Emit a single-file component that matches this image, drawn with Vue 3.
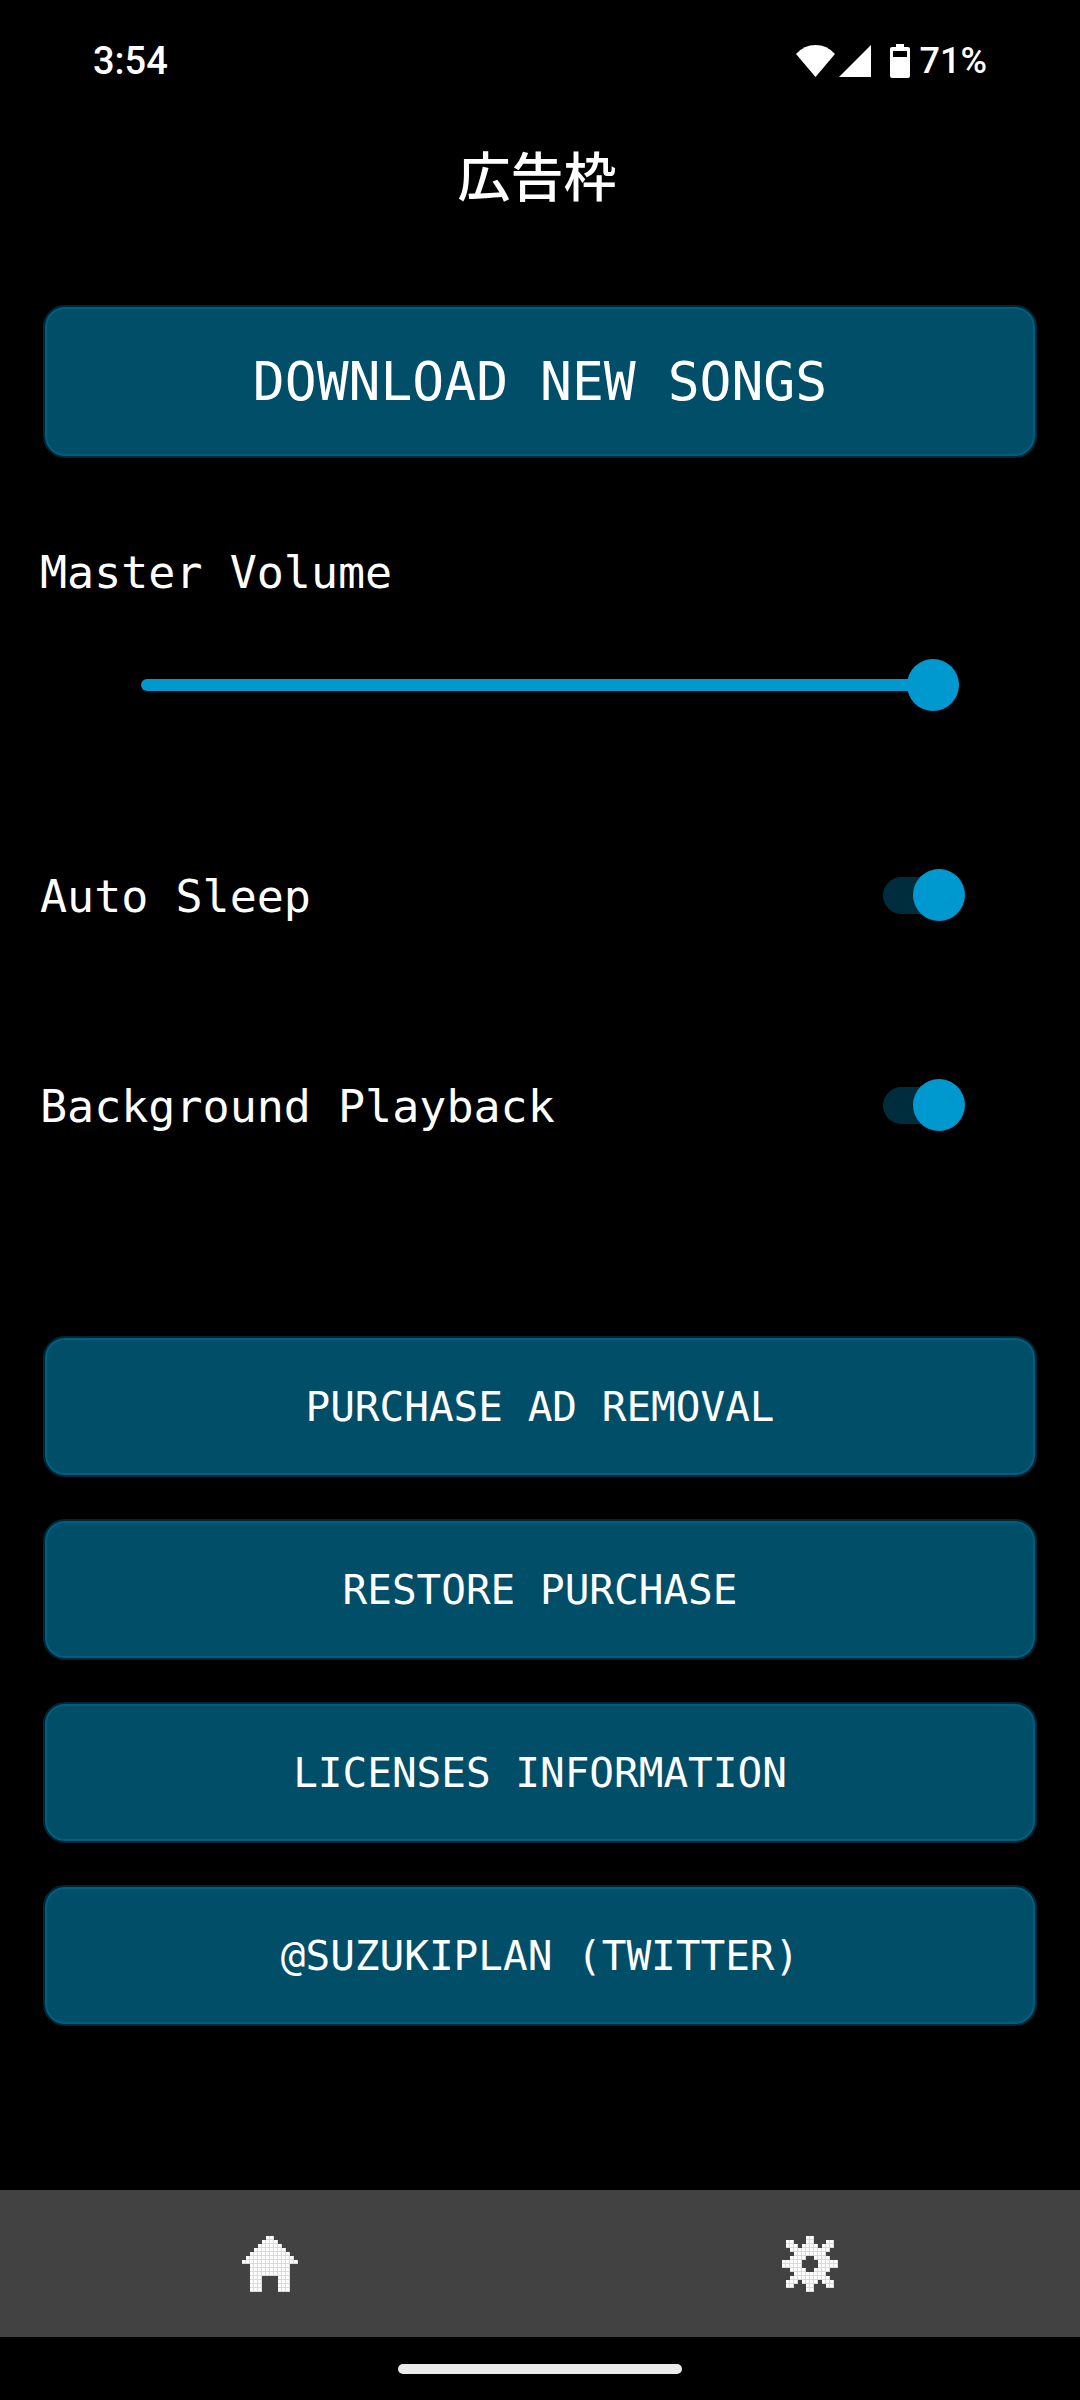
<script setup>
import { ref } from 'vue'

const volume = ref(100)
const switches = ref([
  { id: 'auto-sleep', label: 'Auto Sleep', on: true },
  { id: 'background-playback', label: 'Background Playback', on: true },
])
const actions = [
  'PURCHASE AD REMOVAL',
  'RESTORE PURCHASE',
  'LICENSES INFORMATION',
  '@SUZUKIPLAN (TWITTER)',
]

// Pixel icons for the bottom navigation, one character per 4px cell
const home = [
  '......XX......',
  '.....XXXX.....',
  '....XXXXXX....',
  '...XXXXXXXX...',
  '..XXXXXXXXXX..',
  '.XXXXXXXXXXXX.',
  'XXXXXXXXXXXXXX',
  '..XXXXXXXXXX..',
  '..XXXXXXXXXX..',
  '..XXXXXXXXXX..',
  '..XXX....XXX..',
  '..XXX....XXX..',
  '..XXX....XXX..',
  '..XXX....XXX..',
]
const gear = [
  '......XX......',
  '.XX...XX...XX.',
  '.XXX.XXXX.XXX.',
  '..XXXXXXXXXX..',
  '...XXXXXXXX...',
  '..XXXX..XXXX..',
  'XXXXX....XXXXX',
  'XXXXX....XXXXX',
  '..XXXX..XXXX..',
  '...XXXXXXXX...',
  '..XXXXXXXXXX..',
  '.XXX.XXXX.XXX.',
  '.XX...XX...XX.',
  '......XX......',
]
const toCells = (rows) =>
  rows.flatMap((row, y) =>
    [...row].flatMap((c, x) => (c === 'X' ? [{ x: x * 4, y: y * 4 }] : []))
  )
const tabs = [
  { name: 'Home', cells: toCells(home) },
  { name: 'Settings', cells: toCells(gear) },
]
</script>

<template>
  <div class="screen">
    <header class="status">
      <span class="clock">3:54</span>
      <div class="indicators">
        <svg class="signals" width="76" height="34" viewBox="0 0 76 34" aria-hidden="true">
          <path d="M0 10Q8 1 19.500 1T39 10L19.500 33Z" fill="#fff" />
          <path d="M43 33L75 1V33Z" fill="#fff" />
        </svg>
        <svg width="20" height="34" viewBox="0 0 20 34" aria-hidden="true">
          <path
            fill="#fff"
            fill-rule="evenodd"
            d="M6 0H14V3H18Q20 3 20 5V32Q20 34 18 34H2Q0 34 0 32V5Q0 3 2 3H6ZM3 7V13H17V7Z"
          />
        </svg>
        <span class="charge">71%</span>
      </div>
    </header>

    <div class="ad">広告枠</div>

    <main class="content">
      <button type="button" class="btn btn-large">DOWNLOAD NEW SONGS</button>

      <label class="label volume-label" for="volume">Master Volume</label>
      <input id="volume" v-model="volume" class="slider" type="range" min="0" max="100" />

      <div class="switches">
        <div v-for="s in switches" :key="s.id" class="switch-row">
          <label class="label" :for="s.id">{{ s.label }}</label>
          <input :id="s.id" v-model="s.on" class="switch" type="checkbox" role="switch" />
        </div>
      </div>

      <div class="actions">
        <button v-for="a in actions" :key="a" type="button" class="btn">{{ a }}</button>
      </div>
    </main>

    <nav class="tabs">
      <button v-for="t in tabs" :key="t.name" type="button" class="tab" :aria-label="t.name">
        <svg width="56" height="56" viewBox="0 0 56 56" shape-rendering="crispEdges" aria-hidden="true">
          <g v-for="(c, i) in t.cells" :key="i">
            <rect :x="c.x" :y="c.y" width="4" height="4" fill="#dadada" />
            <rect :x="c.x" :y="c.y" width="3" height="3" fill="#fff" />
          </g>
        </svg>
      </button>
    </nav>
    <div class="gesture"><div class="handle"></div></div>
  </div>
</template>

<style>
body {
  margin: 0;
  background: #000;
}
</style>

<style scoped>
.screen {
  display: flex;
  flex-direction: column;
  min-height: 100vh;
  background: #000;
  color: #fff;
  font-family: "DejaVu Sans Mono", "Noto Sans CJK JP", monospace;
}

.status {
  display: flex;
  align-items: center;
  justify-content: space-between;
  height: 122px;
  padding: 0 93px;
  font-family: Roboto, sans-serif;
  font-weight: 500;
}

.clock {
  font-size: 38px;
}

.indicators {
  display: flex;
  align-items: center;
}

.signals {
  margin-right: 18px;
}

.charge {
  margin-left: 10px;
  font-size: 36px;
}

.ad {
  padding-right: 6px;
  font-family: "Noto Sans CJK JP", sans-serif;
  font-size: 53px;
  font-weight: 500;
  line-height: 104px;
  text-align: center;
}

.content {
  display: flex;
  flex-direction: column;
  padding: 79px 43px 0;
}

.btn {
  height: 141px;
  padding: 0;
  border: 2px solid #002635;
  border-radius: 22px;
  background: #004e67;
  box-shadow: inset 0 0 0 2px #005f80;
  color: #fff;
  font-family: inherit;
  font-size: 41px;
}

.btn-large {
  height: 153px;
  font-size: 53px;
}

.label {
  padding-top: 4px;
  font-size: 45px;
  line-height: 60px;
}

.volume-label {
  margin-top: 81px;
  margin-left: -3px;
}

.slider {
  appearance: none;
  height: 52px;
  margin: 56px 78px 0 98px;
  background: transparent;
}

.slider::-webkit-slider-runnable-track {
  height: 12px;
  border-radius: 6px;
  background: #0099cf;
}

.slider::-webkit-slider-thumb {
  appearance: none;
  width: 52px;
  height: 52px;
  margin-top: -20px;
  border-radius: 50%;
  background: #0099cf;
}

.switches {
  display: flex;
  flex-direction: column;
  gap: 146px;
  margin: 152px 72px 0 -3px;
}

.switch-row {
  display: flex;
  align-items: center;
  justify-content: space-between;
}

.switch {
  appearance: none;
  display: flex;
  align-items: center;
  width: 82px;
  height: 37px;
  margin: 0;
  border-radius: 19px;
  background: #555;
}

.switch::before {
  content: "";
  flex: none;
  width: 52px;
  height: 52px;
  border-radius: 50%;
  background: #bbb;
}

.switch:checked {
  justify-content: flex-end;
  background: linear-gradient(to right, #002d3d 50px, transparent 50px);
}

.switch:checked::before {
  background: #0099cf;
}

.actions {
  display: flex;
  flex-direction: column;
  gap: 42px;
  margin-top: 199px;
}

.tabs {
  display: flex;
  height: 147px;
  margin-top: auto;
  background: #424242;
}

.tab {
  display: flex;
  flex: 1;
  align-items: center;
  justify-content: center;
  padding: 0;
  border: 0;
  background: none;
}

.gesture {
  display: flex;
  justify-content: center;
  height: 36px;
  padding-top: 27px;
}

.handle {
  width: 284px;
  height: 10px;
  border-radius: 5px;
  background: #ebebeb;
}
</style>
